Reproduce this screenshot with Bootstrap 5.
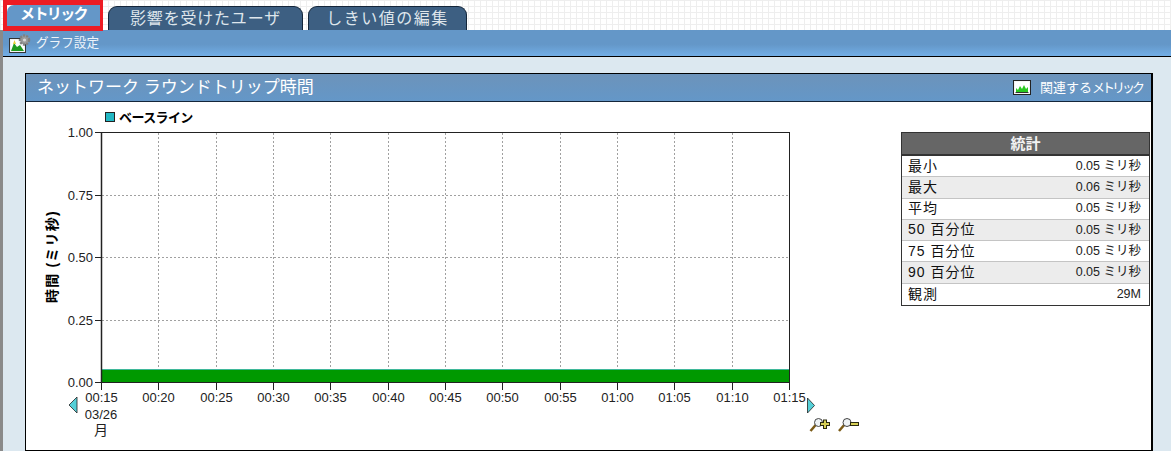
<!DOCTYPE html>
<html lang="ja">
<head>
    <meta charset="UTF-8">
    <meta name="viewport" content="width=device-width, initial-scale=1.0">
    <title>メトリック</title>
    <link href="https://cdn.jsdelivr.net/npm/bootstrap@5.3.3/dist/css/bootstrap.min.css" rel="stylesheet">
    <style>
        body {
            margin: 0;
            height: 451px;
            overflow: hidden;
            background: #dce8f0;
            font-family: "Liberation Sans", "Noto Sans CJK JP", sans-serif;
        }

        .tab-strip {
            height: 30px;
            padding-left: 3px;
            gap: 5px;
            background-color: #fff;
            background-image:
                linear-gradient(#eeeeee 1px, transparent 1px),
                linear-gradient(90deg, #eeeeee 1px, transparent 1px);
            background-size: 6px 6px;
        }

        .tab-on {
            position: relative;
            z-index: 2;
            width: 100px;
            height: 31px;
            border-style: solid;
            border-color: #ed1c24;
            border-width: 5px 3px 5px 4px;
            background: #fff;
        }

        .tab-face {
            height: 21px;
            border-radius: 7px 0 0 0;
            background: #6497c8;
            color: #fff;
            font-size: 15px;
            font-weight: 700;
            letter-spacing: -1.600px;
            line-height: 17px;
            text-align: center;
        }

        .tab-off {
            height: 24px;
            margin-top: 6px;
            background: #3d5f82;
            border: 1px solid #14263a;
            border-bottom: 0;
            border-radius: 9px 9px 0 0;
            color: #dfe6ec;
            font-size: 16px;
            line-height: 24px;
            letter-spacing: .8px;
            text-align: center;
        }

        .tab-wide { width: 195px; }
        .tab-thin { width: 159px; letter-spacing: 1.5px; }

        .page-edge {
            height: 421px;
            border-left: 3px solid #8a8a8a;
        }

        .tool-bar {
            height: 27px;
            padding-left: 6px;
            gap: 5px;
            background: linear-gradient(#6497c8 55%, #72aee6);
            border-bottom: 1px solid #000;
            color: #eef4fa;
            font-size: 12.6px;
        }

        .panel-wrap {
            padding: 16px 18px 0 22px;
        }

        .metric-panel {
            height: 378px;
            border: 1px solid #000;
            border-width: 1px 2px 1px 1px;
            background: #fff;
        }

        .panel-head {
            height: 28px;
            padding: 0 9px 0 11px;
            background: linear-gradient(#6c93ba, #6497c8);
            border-bottom: 1px solid #14263a;
            color: #fff;
            font-size: 17px;
        }

        .head-link {
            gap: 9px;
            font-size: 13px;
        }

        .kana-tight { letter-spacing: -3px; }

        .chart-svg {
            display: block;
            width: 843px;
            height: 348px;
            flex: none;
        }

        .chart-svg text {
            font-family: "Liberation Sans", "Noto Sans CJK JP", sans-serif;
            font-size: 13px;
            fill: #222;
        }

        .chart-svg .legend-text {
            font-weight: 700;
            letter-spacing: -.6px;
            fill: #000;
        }

        .chart-svg .axis-title {
            font-size: 14px;
            font-weight: 700;
            letter-spacing: 1.2px;
            fill: #000;
        }

        .chart-svg .day-text { font-size: 14px; }

        .stat-box {
            width: 249px;
            height: 174px;
            margin: 30px 0 0 32px;
            border: 1px solid #333;
            flex: none;
            font-size: 14px;
        }

        .stat-title {
            height: 23px;
            background: #666;
            border-bottom: 2px solid #333;
            color: #f2f2f2;
            font-size: 15px;
            font-weight: 700;
            line-height: 21px;
            text-align: center;
        }

        .stat-row {
            height: 21.28px;
            padding: 0 8px 0 6px;
            border-bottom: 1px solid #c4c4c4;
            color: #111;
            letter-spacing: 1px;
        }

        .stat-row:last-child { border-bottom: 0; }
        .stat-row:nth-child(even) { background: #ececec; }
        .stat-value { font-size: 12.5px; color: #222; letter-spacing: 0; }
    </style>
</head>
<body>
    <div class="tab-strip d-flex">
        <div class="tab-on"><div class="tab-face">メトリック</div></div>
        <div class="tab-off tab-wide">影響を受けたユーザ</div>
        <div class="tab-off tab-thin">しきい値の編集</div>
    </div>

    <div class="page-edge">
        <div class="tool-bar d-flex align-items-center">
            <svg width="22" height="20" viewBox="0 0 22 20">
                <rect x="0.5" y="5.5" width="16" height="14" fill="#f4f4f4" stroke="#333"/>
                <rect x="2" y="7" width="13" height="11" fill="#fff"/>
                <path d="M2 18l3-8 3 4 3-2 4 6z" fill="#1f9a1f"/>
                <path d="M4 11l1.500-4 1.500 4z" fill="#e8d13a"/>
                <circle cx="15.500" cy="7" r="4.500" fill="#9a9a9a" stroke="#808080" stroke-width="2.500" stroke-dasharray="2 1.200"/>
                <circle cx="15.500" cy="7" r="1.600" fill="#d8d8d8"/>
            </svg>
            <span>グラフ設定</span>
        </div>

        <div class="panel-wrap">
            <div class="metric-panel">
                <div class="panel-head d-flex align-items-center justify-content-between">
                    <span>ネットワーク ラウンドトリップ時間</span>
                    <span class="head-link d-flex align-items-center">
                        <svg width="18" height="15" viewBox="0 0 18 15">
                            <rect x="0.5" y="0.5" width="17" height="14" fill="#f4f4f4" stroke="#222"/>
                            <rect x="2" y="2" width="14" height="11" fill="#fff"/>
                            <path d="M3 12V8l2 2 2-4 2 3 2-4 2 4 2-2v5z" fill="#29c81f"/>
                            <path d="M2.500 12.500h13" stroke="#333"/>
                        </svg>
                        <span>関連する<span class="kana-tight">メトリック</span></span>
                    </span>
                </div>
                <div class="d-flex">
                    <svg class="chart-svg" viewBox="26 102 843 348">
                        <rect x="105.500" y="112.500" width="9" height="9" fill="#22b8c4" stroke="#222"/>
                        <text class="legend-text" x="119" y="122">ベースライン</text>
                        <g id="gridLines"></g>
                        <rect x="101" y="369" width="688" height="13" fill="#009900"/>
                        <rect x="101" y="369" width="688" height="1" fill="#3fb89a"/>
                        <rect x="101.500" y="132.500" width="688" height="250" fill="none" stroke="#222"/>
                        <line x1="101.500" y1="132" x2="101.500" y2="383" stroke="#222" stroke-width="1.500"/>
                        <g id="axisLabels"></g>
                        <text x="101" y="419" text-anchor="middle">03/26</text>
                        <text class="day-text" x="101" y="435" text-anchor="middle">月</text>
                        <text class="axis-title" transform="translate(57 303) rotate(-90)">時間 (ミリ秒)</text>
                        <path d="M77 397v16l-8-8z" fill="#55d0d8" stroke="#222" stroke-width=".8"/>
                        <path d="M807.500 398v15l7-7.500z" fill="#55d0d8" stroke="#222" stroke-width=".8"/>
                        <g id="zoomIn">
                            <path d="M810.500 431l6-7" stroke="#7a5a16" stroke-width="2.500"/>
                            <circle cx="818.500" cy="422.500" r="4" fill="#eef2f4" stroke="#444"/>
                            <path d="M820 424h10M825 419.500v9.500" stroke="#2a2a10" stroke-width="4"/>
                            <path d="M821 424h8M825 420.500v7.500" stroke="#d6cf55" stroke-width="2"/>
                        </g>
                        <g id="zoomOut">
                            <path d="M839 431l6-7" stroke="#7a5a16" stroke-width="2.500"/>
                            <circle cx="847" cy="422.500" r="4" fill="#eef2f4" stroke="#444"/>
                            <path d="M850 424h9" stroke="#2a2a10" stroke-width="4"/>
                            <path d="M851 424h7" stroke="#d6cf55" stroke-width="2"/>
                        </g>
                    </svg>
                    <div class="stat-box">
                        <div class="stat-title">統計</div>
                        <div id="statRows"></div>
                    </div>
                </div>
            </div>
        </div>
    </div>

    <script src="https://cdn.jsdelivr.net/npm/bootstrap@5.3.3/dist/js/bootstrap.bundle.min.js"></script>
    <script>
        const times = ['00:15', '00:20', '00:25', '00:30', '00:35', '00:40', '00:45', '00:50', '00:55', '01:00', '01:05', '01:10', '01:15'];
        const values = ['1.00', '0.75', '0.50', '0.25', '0.00'];
        const stats = [
          ['最小', '0.05 ミリ秒'], ['最大', '0.06 ミリ秒'], ['平均', '0.05 ミリ秒'],
          ['50 百分位', '0.05 ミリ秒'], ['75 百分位', '0.05 ミリ秒'], ['90 百分位', '0.05 ミリ秒'],
          ['観測', '29M']
        ];

        let grid = '';
        let labels = '';
        times.forEach((t, i) => {
          const x = Math.round(101 + i * 57.33) + 0.5;
          if (i > 0 && i < 12) grid += `<line x1="${x}" y1="133" x2="${x}" y2="382" stroke="#a0a0a0" stroke-dasharray="2 2"/>`;
          labels += `<line x1="${x}" y1="382" x2="${x}" y2="390" stroke="#222"/>`;
          labels += `<text x="${x}" y="402" text-anchor="middle">${t}</text>`;
        });
        values.forEach((v, i) => {
          const y = Math.round(132 + i * 62.5) + 0.5;
          if (i > 0 && i < 4) grid += `<line x1="102" y1="${y}" x2="789" y2="${y}" stroke="#a0a0a0" stroke-dasharray="2 2"/>`;
          labels += `<line x1="95" y1="${y}" x2="101" y2="${y}" stroke="#222"/>`;
          labels += `<text x="93" y="${y + 4}" text-anchor="end">${v}</text>`;
        });
        document.getElementById('gridLines').innerHTML = grid;
        document.getElementById('axisLabels').innerHTML = labels;

        document.getElementById('statRows').innerHTML = stats.map(s =>
          `<div class="stat-row d-flex align-items-center justify-content-between"><span>${s[0]}</span><span class="stat-value">${s[1]}</span></div>`
        ).join('');
    </script>
</body>
</html>
